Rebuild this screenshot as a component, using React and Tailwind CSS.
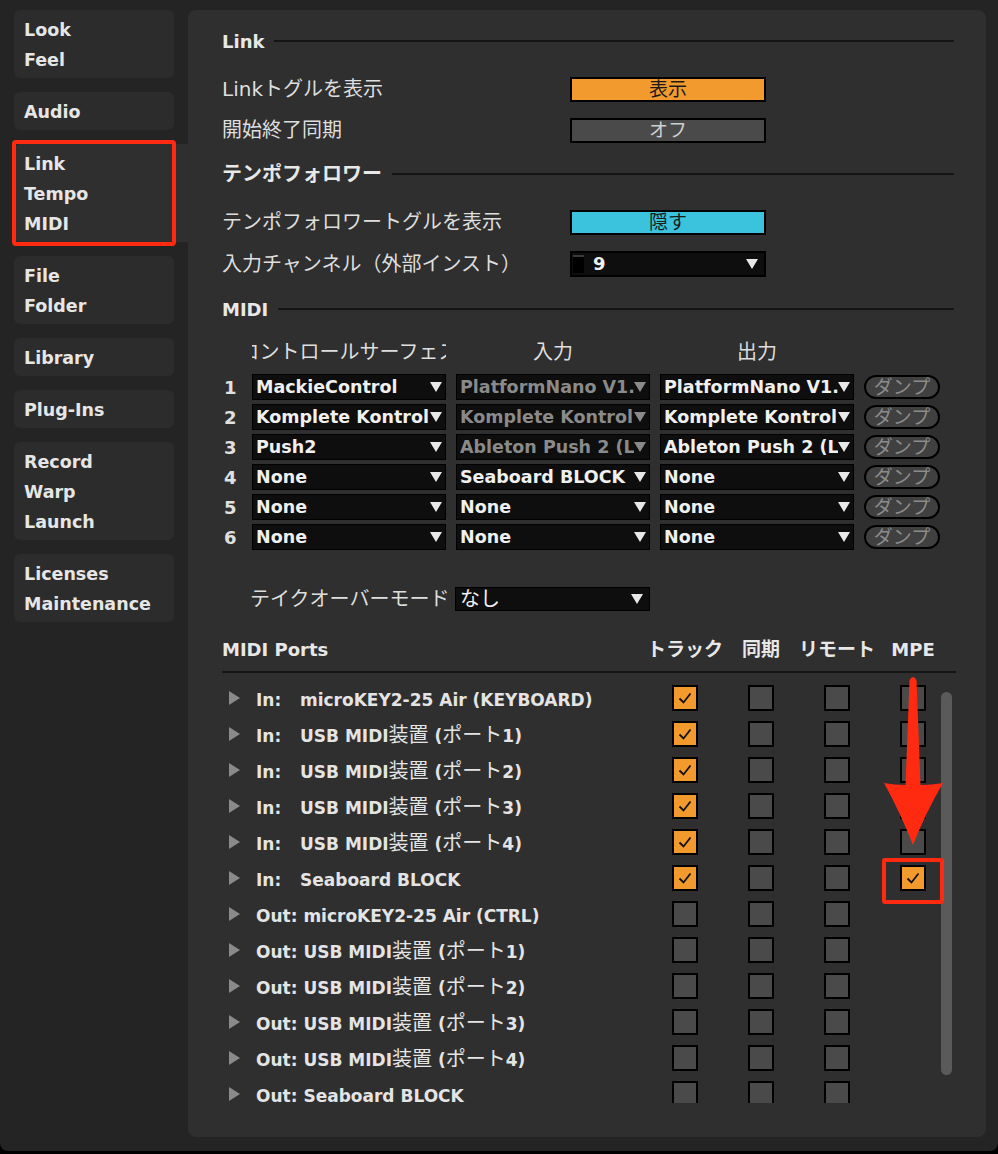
import React from 'react';

const tabs = [
  { lines: ['Look', 'Feel'] },
  { lines: ['Audio'] },
  { lines: ['Link', 'Tempo', 'MIDI'], active: true },
  { lines: ['File', 'Folder'] },
  { lines: ['Library'] },
  { lines: ['Plug-Ins'] },
  { lines: ['Record', 'Warp', 'Launch'] },
  { lines: ['Licenses', 'Maintenance'] },
];

const surfaces = [
  { n: 1, cs: 'MackieControl', inp: 'PlatformNano V1.', out: 'PlatformNano V1.', dim: true },
  { n: 2, cs: 'Komplete Kontrol', inp: 'Komplete Kontrol', out: 'Komplete Kontrol', dim: true },
  { n: 3, cs: 'Push2', inp: 'Ableton Push 2 (L', out: 'Ableton Push 2 (L', dim: true },
  { n: 4, cs: 'None', inp: 'Seaboard BLOCK', out: 'None' },
  { n: 5, cs: 'None', inp: 'None', out: 'None' },
  { n: 6, cs: 'None', inp: 'None', out: 'None' },
];

const ports = [
  { dir: 'In:', name: 'microKEY2-25 Air (KEYBOARD)', track: true, mpe: false },
  { dir: 'In:', name: 'USB MIDI装置 (ポート1)', track: true, mpe: false },
  { dir: 'In:', name: 'USB MIDI装置 (ポート2)', track: true, mpe: false },
  { dir: 'In:', name: 'USB MIDI装置 (ポート3)', track: true, mpe: false },
  { dir: 'In:', name: 'USB MIDI装置 (ポート4)', track: true, mpe: false },
  { dir: 'In:', name: 'Seaboard BLOCK', track: true, mpe: true },
  { dir: 'Out:', name: 'microKEY2-25 Air (CTRL)' },
  { dir: 'Out:', name: 'USB MIDI装置 (ポート1)' },
  { dir: 'Out:', name: 'USB MIDI装置 (ポート2)' },
  { dir: 'Out:', name: 'USB MIDI装置 (ポート3)' },
  { dir: 'Out:', name: 'USB MIDI装置 (ポート4)' },
  { dir: 'Out:', name: 'Seaboard BLOCK' },
];

// japanese runs are set a bit larger, like the original UI font
const Mixed = ({ text }) =>
  text.split(/([\u3000-\u9fff\uff00-\uffef]+)/).map((part, i) =>
    /[\u3000-\u9fff\uff00-\uffef]/.test(part) ? (
      <span key={i} className="text-[20px] font-normal">{part}</span>
    ) : (
      <React.Fragment key={i}>{part}</React.Fragment>
    )
  );

const Heading = ({ title, className = '' }) => (
  <div className={`h-[30px] flex items-center gap-[10px] ${className}`}>
    <span className="font-bold text-[18px] text-[#e8e8e8] whitespace-nowrap">{title}</span>
    <div className="flex-1 h-[2px] bg-[#141414]" />
  </div>
);

const Arrow = ({ dim }) => (
  <svg width="12" height="10" viewBox="0 0 12 10" className="shrink-0">
    <polygon points="0,0 12,0 6,10" fill={dim ? '#8a8a8a' : '#e8e8e8'} />
  </svg>
);

const Dropdown = ({ text, dim, className = '' }) => (
  <div className={`h-[26px] flex items-center bg-[#0e0e0e] border border-black pl-[3px] pr-[3px] ${className}`}>
    <span className={`flex-1 min-w-0 overflow-hidden whitespace-nowrap font-bold text-[17.5px] leading-[24px] ${dim ? 'text-[#8a8a8a]' : 'text-[#f0f0f0]'}`}>
      {text}
    </span>
    <Arrow dim={dim} />
  </div>
);

const Check = ({ on }) => (
  <div className={`w-[26px] h-[26px] border-2 border-black flex items-center justify-center ${on ? 'bg-[#f29a2e]' : 'bg-[#4a4a4a]'}`}>
    {on && (
      <svg width="18" height="18" viewBox="0 0 18 18">
        <polyline points="3.5,9.5 7.5,13.5 14.5,4.5" fill="none" stroke="#111" strokeWidth="1.8" />
      </svg>
    )}
  </div>
);

const Row = ({ label, children, className = '' }) => (
  <div className={`flex items-center ${className}`}>
    <span className="w-[348px] text-[20px] text-[#dedede] whitespace-nowrap">{label}</span>
    {children}
  </div>
);

const Toggle = ({ children, className }) => (
  <div className={`w-[196px] h-[25px] border-2 border-black text-[19px] leading-none flex items-center justify-center ${className}`}>
    {children}
  </div>
);

export default function App() {
  return (
    <div className="relative w-[998px] h-[1154px] bg-black overflow-hidden font-['DejaVu_Sans','Noto_Sans_CJK_JP',sans-serif]">
      <div className="h-[1151px] bg-[#242424] rounded-b-[8px] flex">
        {/* sidebar */}
        <div className="w-[188px] shrink-0 pt-[10px] pl-[14px] flex flex-col gap-[14px]">
          {tabs.map((t, i) => (
            <div
              key={i}
              className={`pt-[5px] pb-[3px] pl-[10px] ${t.active ? 'w-[174px] bg-[#2f2f2f] rounded-l-[6px]' : 'w-[160px] bg-[#2c2c2c] rounded-[6px]'}`}
            >
              {t.lines.map((l) => (
                <div key={l} className="h-[30px] leading-[30px] font-bold text-[17.5px] text-[#e6e6e6]">{l}</div>
              ))}
            </div>
          ))}
        </div>

        {/* main panel */}
        <div className="mt-[10px] w-[798px] h-[1127px] bg-[#2f2f2f] rounded-[8px] pl-[34px] pr-[32px] pt-[16px] overflow-hidden flex flex-col">
          <Heading title="Link" />
          <Row label="Linkトグルを表示" className="mt-[12px] h-[42px]">
            <Toggle className="bg-[#f29a2e] text-[#1a1a1a]">表示</Toggle>
          </Row>
          <Row label="開始終了同期" className="h-[40px]">
            <Toggle className="bg-[#4a4a4a] text-[#d0d0d0]">オフ</Toggle>
          </Row>

          <Heading title={<span className="text-[20px]">テンポフォロワー</span>} className="mt-[9px]" />
          <Row label="テンポフォロワートグルを表示" className="mt-[12px] h-[42px]">
            <Toggle className="bg-[#3bc2dc] text-[#1a1a1a]">隠す</Toggle>
          </Row>
          <Row label="入力チャンネル（外部インスト）" className="h-[42px]">
            <div className="w-[196px] h-[26px] border-2 border-black bg-[#0e0e0e] flex items-center pl-[1px] pr-[6px]">
              <div className="w-[11px] h-[18px] bg-black border-t-2 border-[#3a3a3a]" />
              <span className="ml-[9px] flex-1 font-bold text-[18px] text-[#f0f0f0] leading-none">9</span>
              <Arrow />
            </div>
          </Row>

          <Heading title="MIDI" className="mt-[9px]" />
          <div className="mt-[13px] h-[30px] flex items-center pl-[30px] gap-[10px] text-[20px] text-[#dedede]">
            <div className="w-[194px] flex justify-center overflow-hidden whitespace-nowrap">
              <span className="shrink-0">コントロールサーフェス</span>
            </div>
            <div className="w-[194px] text-center">入力</div>
            <div className="w-[194px] text-center">出力</div>
          </div>
          <div className="mt-[5px] flex flex-col">
            {surfaces.map((s) => (
              <div key={s.n} className="h-[30px] flex items-center">
                <span className="w-[30px] pl-[2px] font-bold text-[18px] text-[#e0e0e0]">{s.n}</span>
                <Dropdown text={s.cs} className="w-[194px]" />
                <Dropdown text={s.inp} dim={s.dim} className="w-[194px] ml-[10px]" />
                <Dropdown text={s.out} className="w-[194px] ml-[10px]" />
                <div className="ml-[10px] w-[76px] h-[24px] rounded-full border-2 border-black bg-[#404040] text-[#8c8c8c] text-[19px] leading-none flex items-center justify-center">ダンプ</div>
              </div>
            ))}
          </div>

          <div className="mt-[32px] h-[30px] flex items-center pl-[28px]">
            <span className="w-[205px] text-[20px] text-[#dedede] whitespace-nowrap">テイクオーバーモード</span>
            <div className="w-[195px] h-[24px] bg-[#0e0e0e] border border-black flex items-center pl-[4px] pr-[6px]">
              <span className="flex-1 text-[20px] text-[#f0f0f0] leading-none">なし</span>
              <Arrow />
            </div>
          </div>

          <div className="mt-[20px] h-[30px] flex items-center font-bold text-[18px] text-[#e8e8e8]">
            <span className="w-[425px]">MIDI Ports</span>
            {['トラック', '同期', 'リモート', 'MPE'].map((h) => (
              <span key={h} className={`w-[76px] text-center whitespace-nowrap ${h === 'MPE' ? '' : 'text-[19px]'}`}>{h}</span>
            ))}
          </div>
          <div className="mt-[7px] h-[2px] bg-[#151515] w-[734px]" />

          <div className="relative mt-[7px] h-[423px] overflow-hidden">
            {ports.map((p, i) => (
              <div key={i} className="h-[36px] flex items-center">
                <svg width="11" height="14" viewBox="0 0 11 14" className="ml-[7px] mr-[16px] shrink-0">
                  <polygon points="0,0 11,7 0,14" fill="#8a8a8a" />
                </svg>
                <div className="w-[391px] flex items-baseline text-[17px] font-bold text-[#e4e4e4] whitespace-nowrap leading-[28px] pt-[3px]">
                  {p.dir === 'In:' ? (
                    <>
                      <span className="w-[44px]">In:</span>
                      <span><Mixed text={p.name} /></span>
                    </>
                  ) : (
                    <span>Out: <Mixed text={p.name} /></span>
                  )}
                </div>
                <div className="w-[76px] flex justify-center"><Check on={p.track} /></div>
                <div className="w-[76px] flex justify-center"><Check /></div>
                <div className="w-[76px] flex justify-center"><Check /></div>
                <div className="w-[76px] flex justify-center">{p.dir === 'In:' && <Check on={p.mpe} />}</div>
              </div>
            ))}
            <div className="absolute right-[2px] top-[12px] w-[11px] h-[383px] rounded-full bg-[#5a5a5a]" />
          </div>
        </div>
      </div>

      {/* annotations */}
      <div className="absolute left-[12px] top-[140px] w-[164px] h-[106px] border-4 border-[#ff2a10] rounded-[4px]" />
      <div className="absolute left-[882px] top-[858px] w-[62px] h-[46px] border-4 border-[#ff2a10] rounded-[3px]" />
      <svg className="absolute left-[880px] top-[672px]" width="70" height="186" viewBox="0 0 70 186">
        <path d="M29.5 8 Q33 2 36.5 8 L40.5 113 Q52 113 63 111 Q46 140 33 173 Q20 140 4 111 Q14 113 25.5 113 Z" fill="#ff2a10" />
      </svg>
    </div>
  );
}
